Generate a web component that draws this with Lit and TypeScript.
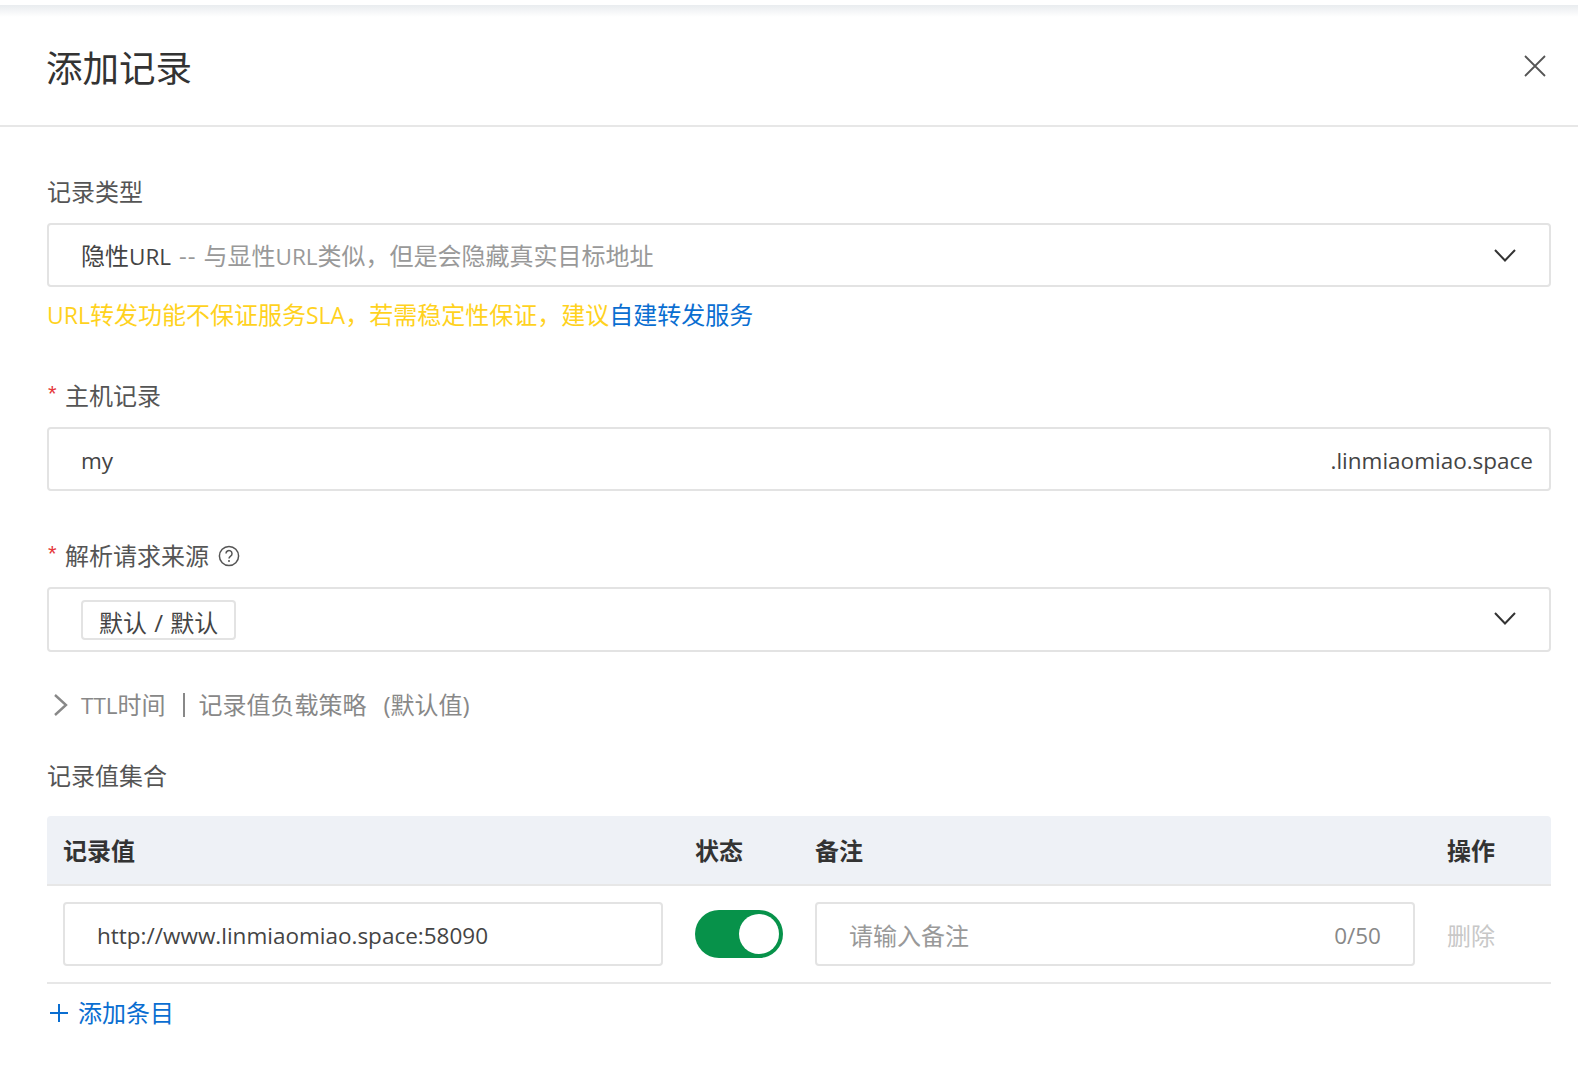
import { LitElement, css, html } from "lit";
import { customElement } from "lit/decorators.js";

const chevronDown = html`<svg class="arrow" width="24" height="15" viewBox="0 0 24 15" fill="none">
  <path d="M2 2l10 10.5L22 2" stroke="#333" stroke-width="2" />
</svg>`;

@customElement("app-root")
export class AppRoot extends LitElement {
  static styles = css`
    :host {
      display: block;
      height: 1072px;
      overflow: hidden;
      background: #fff;
      color: #333;
      font-family: "Open Sans", "Noto Sans CJK SC", sans-serif;
      font-size: 24px;
      line-height: 32px;
    }
    .lat {
      font-size: 22.5px;
    }
    .shade {
      margin-top: 5px;
      height: 12px;
      background: linear-gradient(#e9ecef, #fff);
    }
    .header {
      display: flex;
      align-items: center;
      justify-content: space-between;
      height: 110px;
      padding: 0 32px 0 46px;
      box-sizing: border-box;
      border-bottom: 2px solid #e7e7e7;
    }
    .title {
      font-size: 36.5px;
      line-height: 48px;
      margin-bottom: 6px;
      color: #333;
    }
    .close {
      display: block;
      margin-bottom: 10px;
    }
    .body {
      padding: 0 27px 0 47px;
    }
    .item {
      margin-top: 50px;
    }
    .label {
      display: flex;
      align-items: center;
      height: 32px;
      box-sizing: border-box;
      padding-bottom: 2px;
      margin-bottom: 14px;
      color: #555;
    }
    .star {
      width: 18px;
      padding-left: 1px;
      box-sizing: border-box;
      color: #e5383b;
      font-family: "Liberation Sans", sans-serif;
      font-size: 22px;
      line-height: 24px;
      margin-top: -4px;
    }
    .help {
      margin-left: 9px;
    }
    .box {
      display: flex;
      align-items: center;
      justify-content: space-between;
      height: 64px;
      box-sizing: border-box;
      padding: 3px 32px 0;
      border: 2px solid #e3e3e3;
      border-radius: 4px;
      background: #fff;
      color: #444;
    }
    .box.latin {
      padding-top: 4px;
    }
    .box.source {
      height: 65px;
      padding-top: 0;
    }
    .box.host {
      padding-right: 16px;
    }
    .arrow {
      flex: none;
      margin: -3px 0 0 0;
    }
    .muted {
      color: #999;
    }
    .dash {
      margin: 0 7px 0 8px;
      letter-spacing: 1px;
    }
    .hint {
      margin-top: 12px;
      height: 32px;
      color: #ffd21e;
    }
    .hint .lat {
      font-size: 23px;
    }
    .hint a {
      color: #0a6ed1;
      text-decoration: none;
    }
    .tag {
      align-self: flex-start;
      margin-top: 11px;
      height: 40px;
      box-sizing: border-box;
      padding: 5px 16px 0;
      border: 2px solid #e3e3e3;
      border-radius: 4px;
      line-height: 32px;
      word-spacing: 1px;
      overflow: hidden;
    }
    .more {
      display: flex;
      align-items: center;
      margin-top: 37px;
      height: 32px;
      color: #888;
    }
    .more svg {
      width: 34px;
      flex: none;
    }
    .sep {
      width: 2px;
      height: 24px;
      margin: 0 14px 0 17px;
      background: #888;
    }
    .paren {
      margin-left: 17px;
    }
    .section {
      margin-top: 39px;
      margin-bottom: 24px;
      color: #555;
    }
    .row {
      display: grid;
      grid-template-columns: 600px 88px 600px 48px;
      column-gap: 32px;
      align-items: center;
      padding: 0 56px 0 16px;
    }
    .thead {
      height: 70px;
      box-sizing: border-box;
      padding-top: 2px;
      background: #eef1f6;
      border-bottom: 2px solid #e7e7e7;
      border-radius: 4px 4px 0 0;
      font-weight: 700;
      color: #333;
    }
    .tbody {
      padding-top: 16px;
      padding-bottom: 16px;
      border-bottom: 2px solid #e7e7e7;
    }
    .switch {
      display: flex;
      justify-content: flex-end;
      align-items: center;
      width: 88px;
      height: 48px;
      padding-right: 4px;
      box-sizing: border-box;
      border-radius: 24px;
      background: #07924a;
    }
    .knob {
      width: 40px;
      height: 40px;
      border-radius: 50%;
      background: #fff;
    }
    .count {
      color: #888;
    }
    .disabled {
      color: #c8c8c8;
      padding-top: 4px;
    }
    .add {
      display: flex;
      align-items: center;
      gap: 9px;
      margin-top: 13px;
      height: 32px;
      padding-left: 2px;
      color: #0a6ed1;
    }
  `;

  render() {
    return html`
      <div class="shade"></div>
      <div class="header">
        <div class="title">添加记录</div>
        <svg class="close" width="22" height="22" viewBox="0 0 22 22" fill="none">
          <path d="M1 1l20 20M21 1L1 21" stroke="#555" stroke-width="1.8" />
        </svg>
      </div>
      <div class="body">
        <div class="item">
          <div class="label">记录类型</div>
          <div class="box">
            <div>隐性<span class="lat">URL</span><span class="muted"><span class="dash">--</span>与显性<span class="lat">URL</span>类似，但是会隐藏真实目标地址</span></div>
            ${chevronDown}
          </div>
          <div class="hint"><span class="lat">URL</span>转发功能不保证服务<span class="lat">SLA</span>，若需稳定性保证，建议<a>自建转发服务</a></div>
        </div>
        <div class="item">
          <div class="label"><span class="star">*</span>主机记录</div>
          <div class="box host latin">
            <div class="lat">my</div>
            <div class="lat">.linmiaomiao.space</div>
          </div>
        </div>
        <div class="item">
          <div class="label">
            <span class="star">*</span>解析请求来源
            <svg class="help" width="22" height="22" viewBox="0 0 22 22" fill="none">
              <circle cx="11" cy="11" r="9.6" stroke="#555" stroke-width="1.5" />
              <path d="M8 8.6a3 3 0 1 1 4.6 2.5c-1 .7-1.6 1.2-1.6 2.4" stroke="#555" stroke-width="1.5" />
              <circle cx="11" cy="16" r="1" fill="#555" />
            </svg>
          </div>
          <div class="box source">
            <div class="tag">默认 / 默认</div>
            ${chevronDown}
          </div>
        </div>
        <div class="more">
          <svg height="22" viewBox="0 0 34 22" fill="none">
            <path d="M8 1l11 10L8 21" stroke="#888" stroke-width="2.4" />
          </svg>
          <span><span class="lat">TTL</span>时间</span><span class="sep"></span><span>记录值负载策略</span><span class="paren">(默认值)</span>
        </div>
        <div class="section">记录值集合</div>
        <div class="row thead">
          <div>记录值</div>
          <div>状态</div>
          <div>备注</div>
          <div>操作</div>
        </div>
        <div class="row tbody">
          <div class="box latin"><span class="lat">http://www.linmiaomiao.space:58090</span></div>
          <div class="switch"><div class="knob"></div></div>
          <div class="box">
            <span class="muted">请输入备注</span>
            <span class="count lat">0/50</span>
          </div>
          <div class="disabled">删除</div>
        </div>
        <div class="add">
          <svg width="20" height="20" viewBox="0 0 20 20" fill="none">
            <path d="M10 1v18M1 10h18" stroke="#0a6ed1" stroke-width="2" />
          </svg>
          <span>添加条目</span>
        </div>
      </div>
    `;
  }
}
